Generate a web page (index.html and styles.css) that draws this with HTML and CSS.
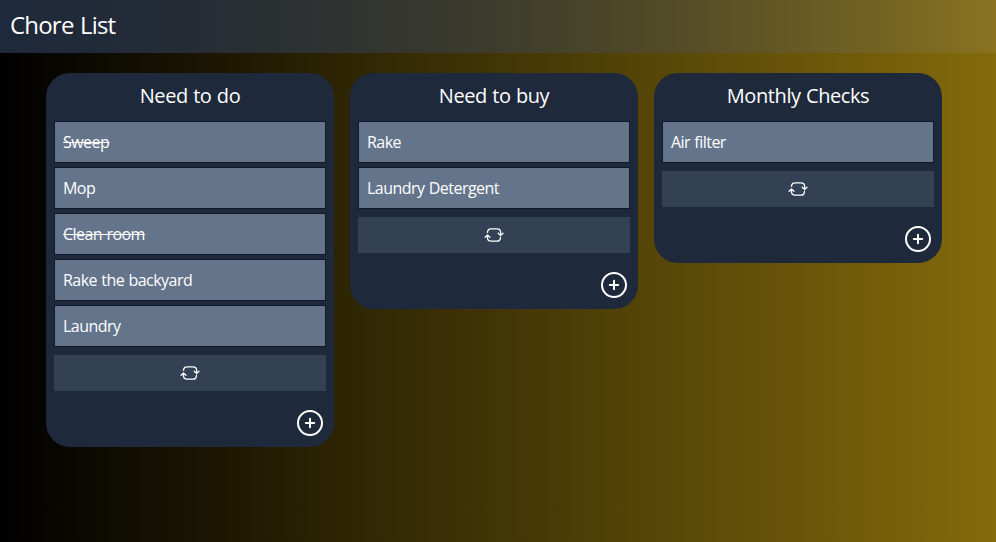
FILE: index.html
```html
<!DOCTYPE html>
<html lang="en">
<head>
<meta charset="utf-8">
<title>Chore List</title>
<link rel="stylesheet" href="styles.css">
</head>
<body>
<svg class="sprite" aria-hidden="true">
  <symbol id="refresh" viewBox="0 0 20 16">
    <path d="M3.5 5.4Q3.7 1.8 7 1.8H13Q16.6 1.8 16.6 5.2V8.2M14.2 6.2l2.4 2.3 2.4-2.3M16.5 10.4Q16.3 14.2 13 14.2H7Q3.5 14.2 3.5 10.8V8.2M1.1 10.2l2.4-2.3 2.4 2.3"/>
  </symbol>
  <symbol id="plus" viewBox="0 0 28 28">
    <circle cx="14" cy="14" r="12"/><path d="M14 9.8v8.4M9.8 14h8.4"/>
  </symbol>
</svg>
<header class="header"><h1>Chore List</h1></header>
<main class="board">
  <section class="card">
    <h2>Need to do</h2>
    <ul>
      <li class="done"><span>Sweep</span></li>
      <li>Mop</li>
      <li class="done"><span>Clean room</span></li>
      <li>Rake the backyard</li>
      <li>Laundry</li>
    </ul>
    <button class="reset" aria-label="Reset"><svg><use href="#refresh"/></svg></button>
    <button class="add" aria-label="Add"><svg><use href="#plus"/></svg></button>
  </section>
  <section class="card">
    <h2>Need to buy</h2>
    <ul>
      <li>Rake</li>
      <li>Laundry Detergent</li>
    </ul>
    <button class="reset" aria-label="Reset"><svg><use href="#refresh"/></svg></button>
    <button class="add" aria-label="Add"><svg><use href="#plus"/></svg></button>
  </section>
  <section class="card">
    <h2>Monthly Checks</h2>
    <ul>
      <li>Air filter</li>
    </ul>
    <button class="reset" aria-label="Reset"><svg><use href="#refresh"/></svg></button>
    <button class="add" aria-label="Add"><svg><use href="#plus"/></svg></button>
  </section>
</main>
</body>
</html>
```
FILE: styles.css
```css
* { box-sizing: border-box; }
body {
  margin: 0;
  min-height: 100vh;
  color: #fff;
  font-family: "Segoe UI", "Open Sans", "Noto Sans", sans-serif;
  background: linear-gradient(to right, #000, #836a0b);
}
h1, h2, ul { margin: 0; padding: 0; font-weight: 400; }
.sprite { display: none; }
.header {
  height: 53px;
  padding: 8px 10px;
  background: linear-gradient(to right, #1e293b, rgba(148, 132, 72, .35));
}
h1 { font-size: 24px; line-height: 33px; letter-spacing: -.8px; word-spacing: 1px; }
.board { display: flex; align-items: flex-start; gap: 16px; padding: 20px 46px; }
.card {
  display: flex;
  flex-direction: column;
  width: 288px;
  padding: 8px;
  border-radius: 24px;
  background: #1e293b;
}
h2 { font-size: 20px; line-height: 30px; text-align: center; letter-spacing: -.42px; word-spacing: .6px; }
ul { display: flex; flex-direction: column; gap: 4px; margin-top: 10px; list-style: none; }
li {
  height: 42px;
  padding: 8px;
  border: 1px solid #0f172a;
  background: #64748b;
  font-size: 16px;
  line-height: 25px;
  letter-spacing: -.53px;
  word-spacing: .6px;
}
.done { text-decoration: line-through; }
button { display: block; padding: 0; border: 0; background: none; color: #fff; }
svg { display: block; fill: none; stroke: #fff; stroke-linecap: round; stroke-linejoin: round; }
.reset { height: 36px; margin-top: 8px; background: #334155; }
.reset svg { width: 20px; height: 16px; margin: 0 auto; stroke-width: 1.3; }
.add { align-self: flex-end; margin: 18px 2px 2px 0; }
.add svg { width: 28px; height: 28px; stroke-width: 2; }
```
